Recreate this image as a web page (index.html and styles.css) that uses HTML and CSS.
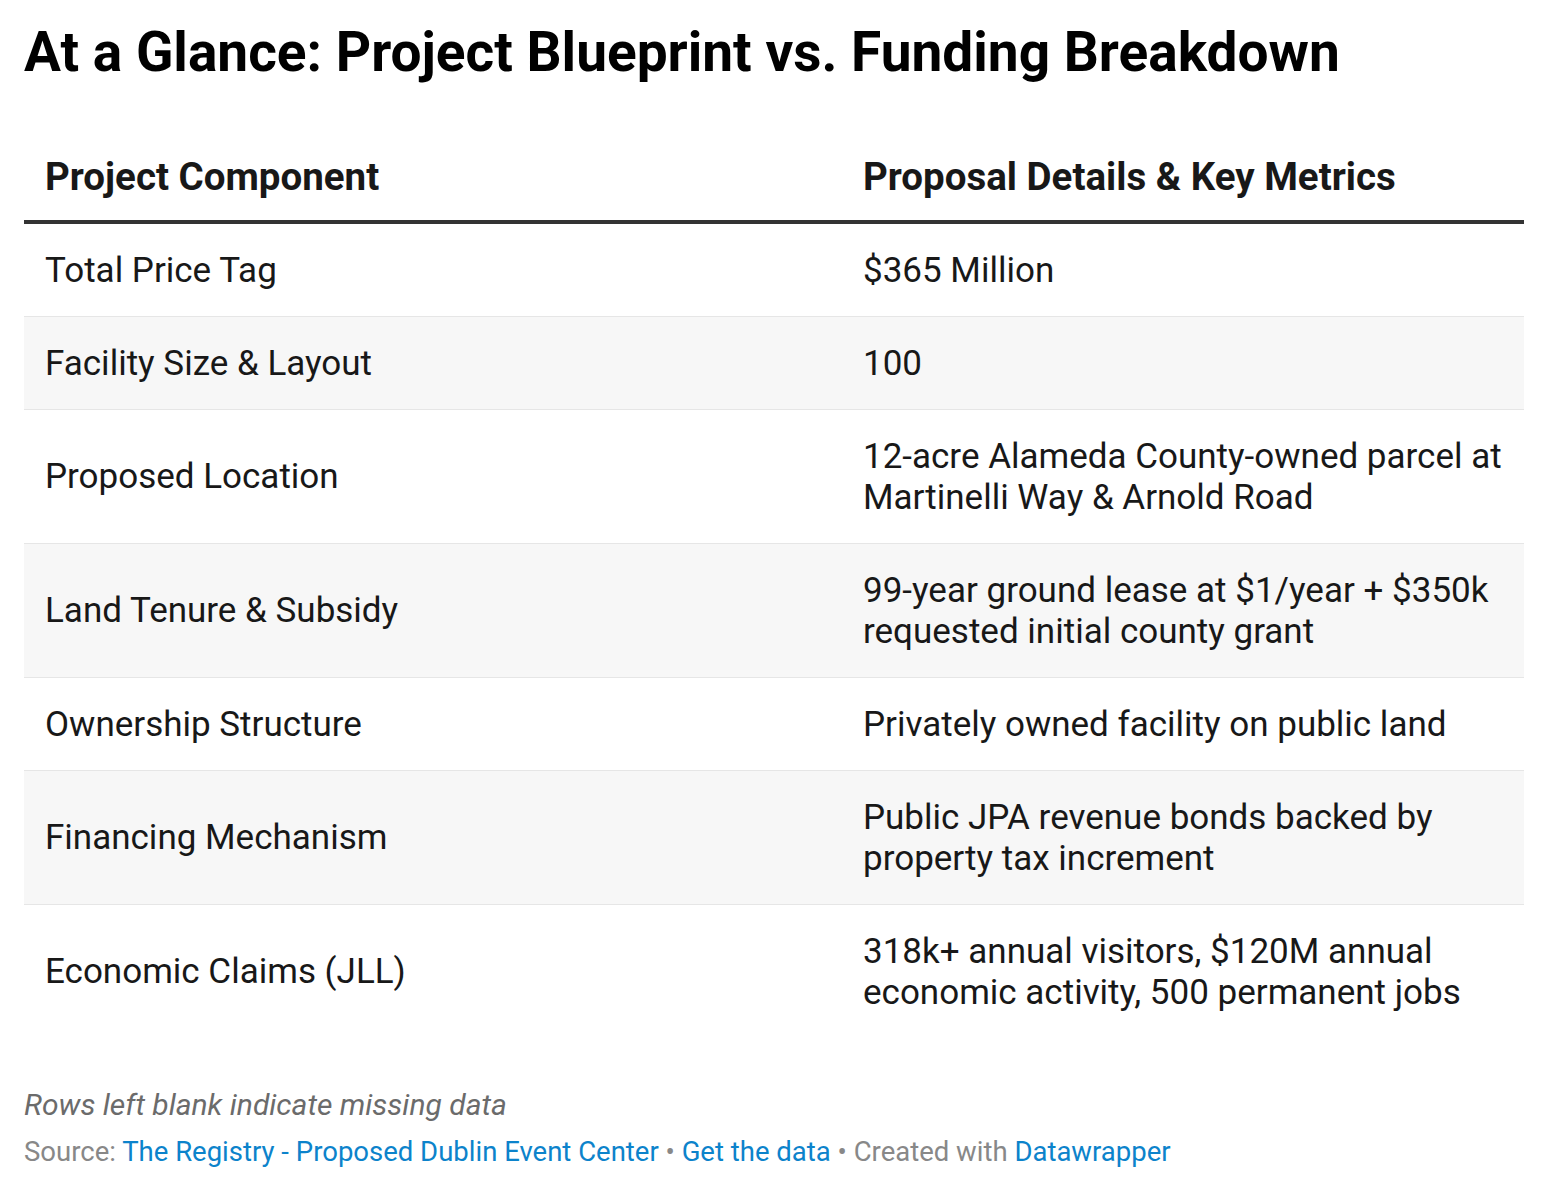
FILE: index.html
```html
<!DOCTYPE html>
<html lang="en">
<head>
<meta charset="utf-8">
<title>At a Glance</title>
<link rel="stylesheet" href="styles.css">
</head>
<body>
<div class="chart">
  <h1 class="title">At a Glance: Project Blueprint vs. Funding Breakdown</h1>
  <table class="tbl">
    <thead>
      <tr>
        <th class="c1">Project Component</th>
        <th class="c2">Proposal Details &amp; Key Metrics</th>
      </tr>
    </thead>
    <tbody>
      <tr><td class="c1">Total Price Tag</td><td class="c2">$365 Million</td></tr>
      <tr><td class="c1">Facility Size &amp; Layout</td><td class="c2">100</td></tr>
      <tr><td class="c1">Proposed Location</td><td class="c2">12-acre Alameda County-owned parcel at Martinelli Way &amp; Arnold Road</td></tr>
      <tr><td class="c1">Land Tenure &amp; Subsidy</td><td class="c2">99-year ground lease at $1/year + $350k requested initial county grant</td></tr>
      <tr><td class="c1">Ownership Structure</td><td class="c2">Privately owned facility on public land</td></tr>
      <tr><td class="c1">Financing Mechanism</td><td class="c2">Public JPA revenue bonds backed by property tax increment</td></tr>
      <tr><td class="c1">Economic Claims (JLL)</td><td class="c2">318k+ annual visitors, $120M annual economic activity, 500 permanent jobs</td></tr>
    </tbody>
  </table>
  <p class="notes">Rows left blank indicate missing data</p>
  <p class="footer">Source: <a href="#">The Registry - Proposed Dublin Event Center</a> • <a href="#">Get the data</a> • Created with <a href="#">Datawrapper</a></p>
</div>
</body>
</html>
```
FILE: styles.css
```css
html, body {
  margin: 0;
  padding: 0;
  background: #ffffff;
}
body {
  font-family: Roboto, "Liberation Sans", sans-serif;
  color: #181818;
}
.chart {
  padding: 19px 24px 0 24px;
}
.title {
  margin: 0;
  font-size: 55px;
  font-weight: 700;
  line-height: 66px;
  color: #000;
}
.tbl {
  width: 1500px;
  margin-top: 69px;
  border-collapse: collapse;
  table-layout: fixed;
}
.tbl th, .tbl td {
  text-align: left;
  vertical-align: middle;
  padding: 0 20px;
}
.tbl .c1 { width: 778px; padding-left: 21px; }
.tbl th {
  font-size: 38.5px;
  font-weight: 700;
  line-height: 46px;
  color: #181818;
  padding-top: 0;
  padding-bottom: 20px;
  border-bottom: 4px solid #333333;
}
.tbl td {
  font-size: 35px;
  line-height: 41px;
  padding-top: 25.5px;
  padding-bottom: 25.5px;
  border-bottom: 1px solid #e6e6e6;
}
.tbl tbody tr:nth-child(even) td { background: #f7f7f7; }
.tbl tbody tr:last-child td { border-bottom: none; }
.notes {
  margin: 49px 0 0 0;
  font-size: 30px;
  line-height: 36px;
  font-style: italic;
  color: #6b6b6b;
}
.footer {
  margin: 12px 0 0 0;
  font-size: 27.5px;
  line-height: 33px;
  color: #888888;
}
.footer a {
  color: #0c83cb;
  text-decoration: none;
}
```
